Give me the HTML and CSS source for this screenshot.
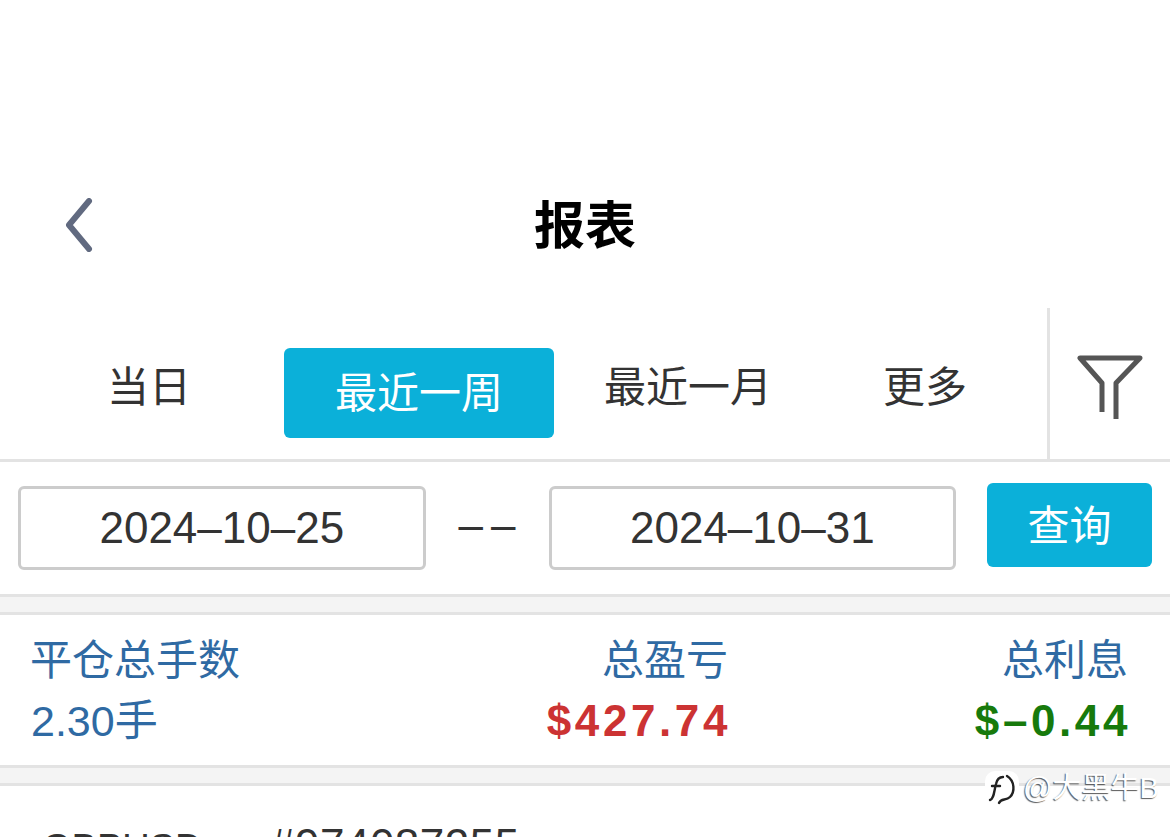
FILE: index.html
```html
<!DOCTYPE html>
<html lang="zh-CN">
<head>
  <meta charset="UTF-8" />
  <meta name="viewport" content="width=device-width, initial-scale=1.0"/>
  <title>报表</title>
  <link rel="stylesheet" href="styles.css">
</head>
<body>
  <header class="topbar">
    <a class="voltar" href="#">
      <svg width="28" height="54" viewBox="0 0 28 54"><path d="M24 3 L4 27 L24 51" fill="none" stroke="#616a80" stroke-width="6" stroke-linecap="round" stroke-linejoin="round"/></svg>
    </a>
    <h1>报表</h1>
  </header>

  <nav class="tabs">
    <div class="tab-list">
      <a class="tab tab-dia" href="#">当日</a>
      <a class="tab tab-semana ativo" href="#">最近一周</a>
      <a class="tab tab-mes" href="#">最近一月</a>
      <a class="tab tab-mais" href="#">更多</a>
    </div>
    <div class="filtro">
      <svg width="66" height="68" viewBox="0 0 66 68"><path d="M25 59 V30 L3 5 H63 L39 30 V66" fill="none" stroke="#555" stroke-width="5" stroke-linejoin="round"/></svg>
    </div>
  </nav>

  <section class="datas">
    <div class="campo-data">2024–10–25</div>
    <span class="separador">––</span>
    <div class="campo-data">2024–10–31</div>
    <button class="consultar">查询</button>
  </section>

  <div class="faixa"></div>

  <section class="resumo">
    <div class="coluna">
      <span class="rotulo">平仓总手数</span>
      <span class="valor">2.30手</span>
    </div>
    <div class="coluna coluna-meio">
      <span class="rotulo">总盈亏</span>
      <strong class="valor vermelho">$427.74</strong>
    </div>
    <div class="coluna coluna-fim">
      <span class="rotulo">总利息</span>
      <strong class="valor verde">$–0.44</strong>
    </div>
  </section>

  <div class="faixa"></div>

  <section class="ordem">
    <span class="par">GBPUSD</span>
    <span class="numero">#974087255</span>
    <span class="data-ordem">2024–11–24 00:11:00</span>
  </section>

  <div class="marca">
    <svg class="marca-icone" width="34" height="34" viewBox="0 0 34 34"><path d="M5 29 C9 28 9 20 11 13 C12 8 14 6 18 6 M7 15 L15 15 M22 5 C30 10 30 21 25 26 C21 30 16 27 14 32" fill="none" stroke="#222" stroke-width="2.4" stroke-linecap="round"/></svg>
    <span class="marca-nome">@大黑牛B</span>
  </div>
</body>
</html>
```

FILE: styles.css
```css
* {
  box-sizing: border-box;
}
html, body {
  height: 837px;
  overflow: hidden;
}
body {
  position: relative;
  margin: 0;
  background: #fff;
  color: #333;
  font-family: "Liberation Sans", "Noto Sans CJK SC", sans-serif;
}
a {
  color: inherit;
  text-decoration: none;
}

.topbar {
  position: relative;
  height: 308px;
  padding-top: 177px;
  text-align: center;
}
.topbar h1 {
  margin: 0;
  height: 100px;
  font-size: 51px;
  line-height: 100px;
  font-weight: 700;
  color: #000;
}
.voltar {
  position: absolute;
  left: 65px;
  top: 198px;
  line-height: 0;
}

.tabs {
  display: flex;
  height: 154px;
  border-bottom: 3px solid #e3e3e3;
}
.tab-list {
  flex: 1;
  display: flex;
  align-items: flex-start;
}
.tab {
  font-size: 42px;
  line-height: 90px;
  text-align: center;
  margin-top: 35px;
}
.tab-dia {
  width: 284px;
  padding-left: 14px;
}
.tab-semana {
  width: 270px;
  height: 90px;
  margin-top: 40px;
  border-radius: 6px;
  line-height: 92px;
}
.tab-mes {
  width: 268px;
}
.tab-mais {
  width: 206px;
}
.ativo {
  background: #0bb0d9;
  color: #fff;
}
.filtro {
  width: 123px;
  border-left: 3px solid #e3e3e3;
  padding: 45px 0 0 27px;
}

.datas {
  display: flex;
  align-items: flex-start;
  height: 135px;
  padding: 21px 18px 0;
  border-bottom: 3px solid #e3e3e3;
}
.campo-data {
  width: 408px;
  height: 84px;
  margin-top: 3px;
  border: 3px solid #ccc;
  border-radius: 6px;
  font-size: 44px;
  line-height: 78px;
  text-align: center;
}
.separador {
  width: 123px;
  padding-left: 8px;
  font-size: 44px;
  letter-spacing: 8px;
  line-height: 84px;
  text-align: center;
}
.consultar {
  width: 165px;
  height: 84px;
  margin-left: 31px;
  padding: 0 0 6px;
  border: none;
  border-radius: 6px;
  background: #0bb0d9;
  color: #fff;
  font-family: inherit;
  font-size: 42px;
}

.faixa {
  height: 18px;
  background: #f4f4f4;
  border-bottom: 3px solid #e3e3e3;
}

.resumo {
  display: flex;
  height: 153px;
  padding: 16px 42px 0 30px;
  border-bottom: 3px solid #e3e3e3;
}
.coluna {
  display: flex;
  flex-direction: column;
  width: 200px;
}
.coluna-meio {
  width: 498px;
  align-items: flex-end;
}
.coluna-fim {
  flex: 1;
  align-items: flex-end;
}
.rotulo, .valor {
  line-height: 60px;
  color: #2f6aa3;
  white-space: nowrap;
}
.rotulo {
  font-size: 42px;
}
.valor {
  font-size: 43px;
  padding-left: 1px;
}
.vermelho, .verde {
  font-size: 44px;
  letter-spacing: 3.6px;
  margin-right: -3px;
}
.vermelho {
  color: #cc3333;
}
.verde {
  color: #177a0c;
}

.ordem {
  display: flex;
  align-items: flex-start;
  height: 51px;
  overflow: hidden;
  padding: 34px 20px 0 42px;
  font-size: 44px;
  line-height: 50px;
}
.par {
  width: 228px;
  padding-top: 6px;
  font-size: 38px;
  line-height: 44px;
}
.numero {
  letter-spacing: 0.5px;
}
.data-ordem {
  margin-left: auto;
  padding-top: 14px;
  line-height: 44px;
  word-spacing: 10px;
}

.marca {
  position: absolute;
  left: 985px;
  top: 771px;
  display: flex;
  align-items: center;
  gap: 4px;
}
.marca-icone {
  background: #fff;
  border-radius: 10px;
}
.marca-nome {
  font-size: 29px;
  line-height: 32px;
  color: #fff;
  text-shadow: -1px 1px 1px rgba(0, 0, 0, 0.65);
}
```
